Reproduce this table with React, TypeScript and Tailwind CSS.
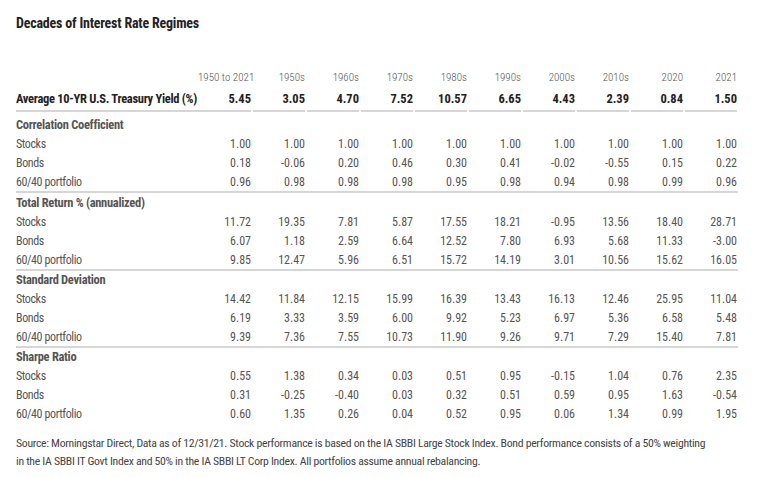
const years = ['1950 to 2021', '1950s', '1960s', '1970s', '1980s', '1990s', '2000s', '2010s', '2020', '2021'];

const avgYield = ['5.45', '3.05', '4.70', '7.52', '10.57', '6.65', '4.43', '2.39', '0.84', '1.50'];

const sections = [
  {
    title: 'Correlation Coefficient',
    rows: [
      { label: 'Stocks', values: ['1.00', '1.00', '1.00', '1.00', '1.00', '1.00', '1.00', '1.00', '1.00', '1.00'] },
      { label: 'Bonds', values: ['0.18', '-0.06', '0.20', '0.46', '0.30', '0.41', '-0.02', '-0.55', '0.15', '0.22'] },
      { label: '60/40 portfolio', values: ['0.96', '0.98', '0.98', '0.98', '0.95', '0.98', '0.94', '0.98', '0.99', '0.96'] },
    ],
  },
  {
    title: 'Total Return % (annualized)',
    rows: [
      { label: 'Stocks', values: ['11.72', '19.35', '7.81', '5.87', '17.55', '18.21', '-0.95', '13.56', '18.40', '28.71'] },
      { label: 'Bonds', values: ['6.07', '1.18', '2.59', '6.64', '12.52', '7.80', '6.93', '5.68', '11.33', '-3.00'] },
      { label: '60/40 portfolio', values: ['9.85', '12.47', '5.96', '6.51', '15.72', '14.19', '3.01', '10.56', '15.62', '16.05'] },
    ],
  },
  {
    title: 'Standard Deviation',
    rows: [
      { label: 'Stocks', values: ['14.42', '11.84', '12.15', '15.99', '16.39', '13.43', '16.13', '12.46', '25.95', '11.04'] },
      { label: 'Bonds', values: ['6.19', '3.33', '3.59', '6.00', '9.92', '5.23', '6.97', '5.36', '6.58', '5.48'] },
      { label: '60/40 portfolio', values: ['9.39', '7.36', '7.55', '10.73', '11.90', '9.26', '9.71', '7.29', '15.40', '7.81'] },
    ],
  },
  {
    title: 'Sharpe Ratio',
    rows: [
      { label: 'Stocks', values: ['0.55', '1.38', '0.34', '0.03', '0.51', '0.95', '-0.15', '1.04', '0.76', '2.35'] },
      { label: 'Bonds', values: ['0.31', '-0.25', '-0.40', '0.03', '0.32', '0.51', '0.59', '0.95', '1.63', '-0.54'] },
      { label: '60/40 portfolio', values: ['0.60', '1.35', '0.26', '0.04', '0.52', '0.95', '0.06', '1.34', '0.99', '1.95'] },
    ],
  },
];

const grid = 'grid grid-cols-[182px_repeat(10,54px)]';

export default function App() {
  return (
    <div className="w-[778px] h-[478px] bg-white px-4 pt-[13px] font-['Roboto_Condensed',sans-serif] overflow-hidden">
      <h1 className="text-[14px] leading-5 font-bold tracking-[-0.2px] text-[#222]">Decades of Interest Rate Regimes</h1>

      <div className="w-[722px] mt-[36px]">
        {/* column headings */}
        <div className={`${grid} h-[19px] items-center text-[11px] font-light text-[#555] whitespace-nowrap`}>
          <div />
          {years.map((y) => (
            <div key={y} className="text-right pr-[1px]">{y}</div>
          ))}
        </div>

        <div className={`${grid} h-[22px] items-center text-[12.5px] font-bold text-[#222] whitespace-nowrap`}>
          <div className="tracking-[-0.3px]">Average 10-YR U.S. Treasury Yield (%)</div>
          {avgYield.map((v, i) => (
            <div key={i} className="text-right pr-[1px]">{v}</div>
          ))}
        </div>

        {/* broken rule under the yield row */}
        <div className={`${grid} h-[2px]`}>
          <div className="col-span-2 mr-[1px] bg-[#d6d6d6]" />
          {years.slice(1).map((y) => (
            <div key={y} className="mx-[1px] bg-[#d6d6d6]" />
          ))}
        </div>

        {sections.map((sec, si) => (
          <div key={sec.title}>
            {si > 0 && <div className="h-[2px] bg-[#d6d6d6]" />}
            <div className={si === 0 ? 'pt-[4px]' : si === 1 ? 'pt-[1px]' : ''}>
              <div className="h-[18.75px] flex items-center text-[12.5px] font-bold tracking-[-0.3px] text-[#555] whitespace-nowrap">
                {sec.title}
              </div>
              {sec.rows.map((row) => (
                <div key={row.label} className={`${grid} h-[18.75px] items-center text-[12px] text-[#555] whitespace-nowrap`}>
                  <div className="tracking-[-0.4px]">{row.label}</div>
                  {row.values.map((v, i) => (
                    <div key={i} className="text-right pr-[1px]">{v}</div>
                  ))}
                </div>
              ))}
            </div>
          </div>
        ))}
      </div>

      <p className="mt-[11px] text-[11.75px] leading-[18px] tracking-[-0.3px] text-[#444] whitespace-nowrap">
        Source: Morningstar Direct, Data as of 12/31/21. Stock performance is based on the IA SBBI Large Stock Index. Bond performance consists of a 50% weighting
        <br />
        in the IA SBBI IT Govt Index and 50% in the IA SBBI LT Corp Index. All portfolios assume annual rebalancing.
      </p>
    </div>
  );
}
